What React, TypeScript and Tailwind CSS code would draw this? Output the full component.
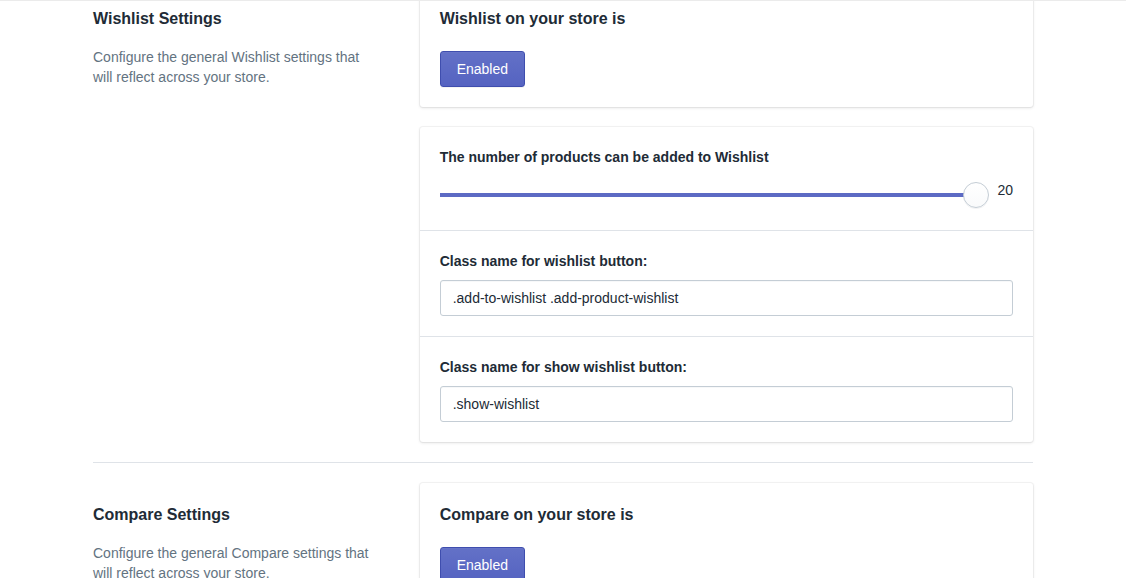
import React from 'react';

const font = { fontFamily: '"Liberation Sans", Arial, sans-serif' };

const PrimaryButton: React.FC<{ label: string }> = ({ label }) => (
  <button className="h-9 rounded-[3px] border border-[#3f4eae] bg-gradient-to-b from-[#6371c7] to-[#5563c1] px-4 text-sm text-white shadow-[inset_0_1px_0_0_#6774c8,0_1px_0_0_rgba(22,29,37,0.05)]">
    {label}
  </button>
);

const Card: React.FC<{ children: React.ReactNode }> = ({ children }) => (
  <div className="rounded-[3px] bg-white shadow-[0_0_0_1px_rgba(63,63,68,0.05),0_1px_3px_0_rgba(63,63,68,0.15)]">
    {children}
  </div>
);

const TextField: React.FC<{ label: string; value: string }> = ({ label, value }) => (
  <div>
    <div className="mb-[9px] text-sm leading-5 font-bold text-[#212b36]">{label}</div>
    <div className="flex h-9 items-center rounded-[3px] border border-[#c4cdd5] bg-white px-3 text-sm text-[#212b36] shadow-[inset_0_1px_0_0_rgba(99,115,129,0.05)]">
      {value}
    </div>
  </div>
);

const Annotation: React.FC<{ title: string; text: string }> = ({ title, text }) => (
  <div className="flex-[1_1_240px] pt-5 pr-5">
    <h2 className="text-base leading-6 font-bold text-[#212b36]">{title}</h2>
    <p className="mt-4 text-sm leading-5 text-[#637381]">{text}</p>
  </div>
);

const ToggleCard: React.FC<{ title: string }> = ({ title }) => (
  <Card>
    <div className="p-5">
      <h3 className="text-base leading-6 font-bold text-[#212b36]">{title}</h3>
      <div className="mt-5">
        <PrimaryButton label="Enabled" />
      </div>
    </div>
  </Card>
);

export default function App() {
  return (
    <div className="h-screen overflow-hidden bg-white" style={font}>
      <div className="fixed top-0 right-0 left-0 z-10 h-px bg-[#ebebeb]" />

      <div className="mx-auto -mt-[13px] max-w-[940px]">
        {/* Wishlist section */}
        <div className="flex gap-5">
          <Annotation
            title="Wishlist Settings"
            text="Configure the general Wishlist settings that will reflect across your store."
          />
          <div className="flex flex-[2_2_480px] flex-col gap-5">
            <ToggleCard title="Wishlist on your store is" />
            <Card>
              <div className="p-5">
                <div className="text-sm leading-5 font-bold text-[#212b36]">
                  The number of products can be added to Wishlist
                </div>
                <div className="mt-[15px] flex h-7 items-center gap-2">
                  <div className="relative h-full flex-1">
                    <div className="absolute top-[11px] right-[25px] left-0 h-1 bg-[#5c6ac4]" />
                    <div className="absolute top-0 right-0 h-[26px] w-[26px] rounded-full border border-[#c4cdd5] bg-gradient-to-b from-white to-[#f9fafb] shadow-[0_1px_0_0_rgba(22,29,37,0.05)]" />
                  </div>
                  <span className="-mt-[12px] text-sm text-[#212b36]">20</span>
                </div>
              </div>
              <div className="border-t border-[#dfe3e8] p-5">
                <TextField label="Class name for wishlist button:" value=".add-to-wishlist .add-product-wishlist" />
              </div>
              <div className="border-t border-[#dfe3e8] p-5">
                <TextField label="Class name for show wishlist button:" value=".show-wishlist" />
              </div>
            </Card>
          </div>
        </div>

        <div className="mt-5 border-t border-[#dfe3e8]" />

        {/* Compare section */}
        <div className="mt-5 flex gap-5">
          <Annotation
            title="Compare Settings"
            text="Configure the general Compare settings that will reflect across your store."
          />
          <div className="flex flex-[2_2_480px] flex-col gap-5">
            <ToggleCard title="Compare on your store is" />
          </div>
        </div>
      </div>
    </div>
  );
}
